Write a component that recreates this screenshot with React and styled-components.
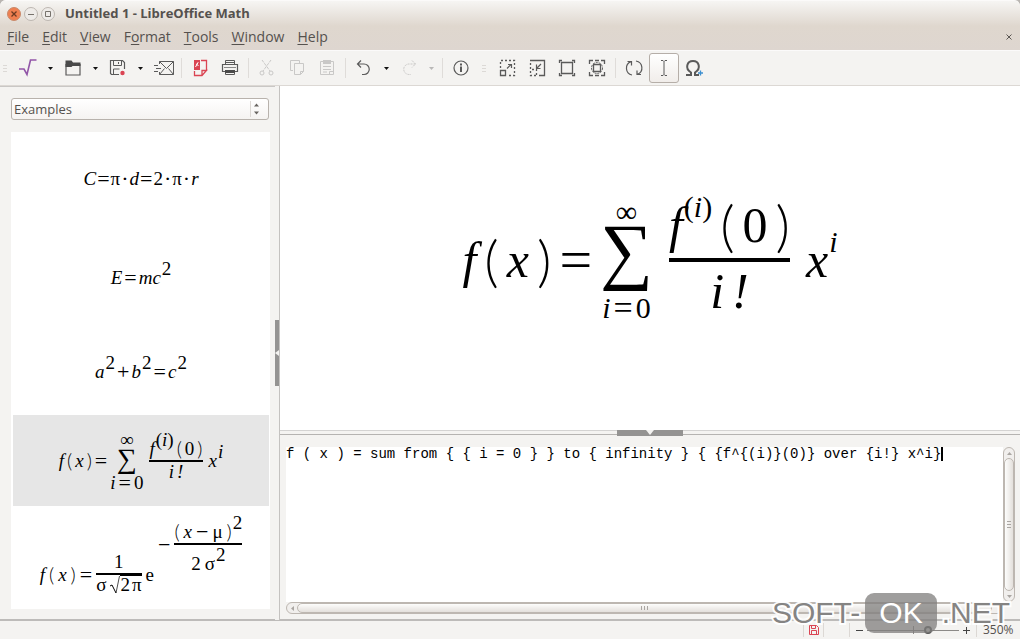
import React, { useState } from 'react';
import styled, { createGlobalStyle, css } from 'styled-components';

const menus = [
  ['', 'F', 'ile'],
  ['', 'E', 'dit'],
  ['', 'V', 'iew'],
  ['F', 'o', 'rmat'],
  ['', 'T', 'ools'],
  ['', 'W', 'indow'],
  ['', 'H', 'elp'],
];

const source =
  'f ( x ) = sum from { { i = 0 } } to { infinity } { {f^{(i)}(0)} over {i!} x^i}';

const icons = {
  formula: (
    <path d='M0 10h5l3 5.500L11.500 1H17.500' stroke='#9256a8' strokeWidth='1.600' />
  ),
  open: (
    <>
      <path d='M2 5.500h14v10.500H2z' strokeWidth='1.200' />
      <path d='M1.500 1.500h6l1.500 2h7.500V7h-8L7.500 8h-6z' fill='#4a4a4a' stroke='none' />
    </>
  ),
  save: (
    <>
      <path d='M10 15.500H2.500L1.500 14.500V1.500H13.500L15.500 3.500V10' strokeWidth='1.200' />
      <path d='M4.500 1.500v5h8v-5M9.500 3v2M4.500 15v-5h6' />
      <circle cx='13.500' cy='14' r='2.200' fill='#da4453' stroke='none' />
    </>
  ),
  mail: (
    <path d='M5.500 5V2.500h14v13h-14V13M5.500 2.500l7 7 7-7M19.500 15.500l-5-6M5.500 15.500l5-6M0 6.500h4M2 9.500h5M0 12.500h4' />
  ),
  pdf: (
    <>
      <path d='M3 1h6v10H3z' fill='#da4453' stroke='none' />
      <path d='M10 1.500h5.500V11M3.500 12v4.500H11l4.500-5H11V16' stroke='#da4453' strokeWidth='1.300' />
      <path d='M4.500 8l2.500-4.500-1.500 2 2 1' stroke='#fff' />
    </>
  ),
  print: (
    <>
      <path d='M4.500 5V1.500h9V5M4.500 3.500h9' />
      <path d='M1.500 5.500h15v7h-15z' strokeWidth='1.200' />
      <path d='M3 8.500h12' stroke='#8a8a8a' />
      <path d='M4.500 11.500h9v4h-9z' fill='#f4f3f1' />
      <path d='M4 11h10v3H4z' fill='#4a4a4a' stroke='none' />
    </>
  ),
  cut: (
    <>
      <path d='M4 1l8 11M13 1L5 12' strokeDasharray='3 1' />
      <circle cx='4' cy='14' r='2' />
      <circle cx='13' cy='14' r='2' />
    </>
  ),
  copy: <path d='M5 11.500H2.500v-10h9V4M6.500 4.500h9v8l-3 3h-6zM15.500 12.500h-3v3' />,
  paste: (
    <>
      <path d='M2.500 2.500h13v13h-13z' />
      <path d='M5 1h8v4H5z' fill='#c9c8c7' stroke='none' />
      <path d='M5 7.500h8M5 10.500h8M5 13h4' />
      <path d='M11.500 15.500v-3h4' />
    </>
  ),
  undo: <path d='M6 1.500L2.500 5 6 8.500M2.500 5H9a5 5 0 0 1 0 10.500H7' strokeWidth='1.200' />,
  redo: (
    <path d='M12 1.500L15.500 5 12 8.500M15.500 5H9a5 5 0 0 0 0 10.500h2' strokeDasharray='2 1' />
  ),
  info: (
    <>
      <circle cx='9' cy='9' r='7' strokeWidth='1.200' />
      <path d='M9 7.500V13M9 4.500v2' strokeWidth='2' />
    </>
  ),
  zoomIn: (
    <>
      <path d='M2.500 11.500h5v5h-5z' strokeWidth='1.300' />
      <path d='M2.500 9V1.500h14v15H9' strokeDasharray='2 2' strokeWidth='1.300' />
      <path d='M9 9.500l4-4M10 5.500h3.500V9' strokeWidth='1.200' />
    </>
  ),
  zoomOut: (
    <>
      <path d='M2 1.500h14.500v15H11' strokeWidth='1.300' />
      <path d='M2.500 4v7M4 10.500h4.500v6M2.500 12v4.500H9' strokeDasharray='2 2' strokeWidth='1.300' />
      <path d='M13 5L9 9M8.500 5.500v4h4' strokeWidth='1.200' />
    </>
  ),
  zoom100: (
    <path
      d='M3.500 3.500h11v11h-11zM1.500 4V1.500H4M14 1.500h2.500V4M1.500 14v2.500H4M14 16.500h2.500V14'
      strokeWidth='1.300'
    />
  ),
  showAll: (
    <>
      <path
        d='M1.500 5V1.500H5M7 1.500h4M13 1.500h3.500V5M1.500 13v3.500H5M7 16.500h4M13 16.500h3.500V13'
        strokeWidth='1.300'
      />
      <circle cx='9' cy='9' r='5.500' strokeDasharray='2 1' />
      <path d='M5.500 5.500h7v7h-7z' strokeWidth='1.300' />
    </>
  ),
  update: (
    <path
      d='M7 16A7 7 0 0 1 6 2.600M2.500 2.500h4v4M11 2a7 7 0 0 1 1.500 13.400M16 15.500h-4v-4'
      strokeWidth='1.200'
    />
  ),
  cursor: <path d='M9 2.500v13M6 1.500h2l1 1 1-1h2M6 16.500h2l1-1 1 1h2' />,
  symbols: (
    <>
      <path d='M1 16h5v-2.500C-.5 9.500 2 2 8 2s8.500 7.500 2 11.500V16h4' strokeWidth='2' />
      <path d='M15.500 11.500v5M13 14h5' stroke='#3c8fd0' strokeWidth='1.300' />
    </>
  ),
};

const tools = [
  { icon: 'formula', label: 'New formula', menu: true },
  { icon: 'open', label: 'Open', menu: true },
  { icon: 'save', label: 'Save', menu: true },
  { icon: 'mail', label: 'Send by email' },
  { type: 'separator' },
  { icon: 'pdf', label: 'Export as PDF' },
  { icon: 'print', label: 'Print' },
  { type: 'separator' },
  { icon: 'cut', label: 'Cut', disabled: true },
  { icon: 'copy', label: 'Copy', disabled: true },
  { icon: 'paste', label: 'Paste', disabled: true },
  { type: 'separator' },
  { icon: 'undo', label: 'Undo', menu: true },
  { icon: 'redo', label: 'Redo', menu: true, disabled: true },
  { type: 'separator' },
  { icon: 'info', label: 'Document information' },
  { type: 'handle' },
  { icon: 'zoomIn', label: 'Zoom in' },
  { icon: 'zoomOut', label: 'Zoom out' },
  { icon: 'zoom100', label: 'Zoom 100%' },
  { icon: 'showAll', label: 'Show all' },
  { type: 'separator' },
  { icon: 'update', label: 'Update' },
  { icon: 'cursor', label: 'Formula cursor', active: true },
  { icon: 'symbols', label: 'Symbols' },
];

function Icon({ name, disabled }) {
  return (
    <svg
      width='18'
      height='18'
      viewBox='0 0 18 18'
      fill='none'
      overflow='visible'
      stroke={disabled ? '#c9c8c7' : '#5a5a5a'}
      aria-hidden='true'
    >
      {icons[name]}
    </svg>
  );
}

function ToolbarItem({ item }) {
  if (item.type === 'separator') return <Separator />;
  if (item.type === 'handle') return <Handle />;
  return (
    <>
      <ToolButton aria-label={item.label} disabled={item.disabled} $active={item.active}>
        <Icon name={item.icon} disabled={item.disabled} />
      </ToolButton>
      {item.menu && (
        <ToolButton aria-label={`${item.label} options`} disabled={item.disabled} $narrow>
          <svg width='5' height='3' viewBox='0 0 5 3' aria-hidden='true'>
            <path d='M0 0h5L2.500 3z' fill={item.disabled ? '#b9b8b7' : '#111'} />
          </svg>
        </ToolButton>
      )}
    </>
  );
}

function Series({ big }) {
  return (
    <Formula $big={big} $gap={big ? 8 : 3}>
      <i>f</i>
      <Paren>(</Paren>
      <i>x</i>
      <Paren>)</Paren>
      <Op>=</Op>
      <Stack>
        <Limit>∞</Limit>
        <Sum>∑</Sum>
        <Limit>
          <i>i</i>
          <Op>=</Op>
          <span>0</span>
        </Limit>
      </Stack>
      <Fraction>
        <Numerator>
          <i>f</i>
          <Sup>
            (<i>i</i>)
          </Sup>
          <Paren>(</Paren>
          <span>0</span>
          <Paren>)</Paren>
        </Numerator>
        <Bar />
        <Denominator>
          <i>i</i>
          <i>!</i>
        </Denominator>
      </Fraction>
      <Power>
        <i>x</i>
        <Sup>
          <i>i</i>
        </Sup>
      </Power>
    </Formula>
  );
}

function Circumference() {
  return (
    <Formula $gap={1}>
      <i>C</i>
      <Op>=</Op>
      <span>π</span>
      <Op>·</Op>
      <i>d</i>
      <Op>=</Op>
      <span>2</span>
      <Op>·</Op>
      <span>π</span>
      <Op>·</Op>
      <i>r</i>
    </Formula>
  );
}

function Energy() {
  return (
    <Formula $end $gap={2}>
      <i>E</i>
      <Op>=</Op>
      <i>mc</i>
      <Sup>2</Sup>
    </Formula>
  );
}

function Pythagoras() {
  return (
    <Formula $end $gap={2}>
      <i>a</i>
      <Sup>2</Sup>
      <Op>+</Op>
      <i>b</i>
      <Sup>2</Sup>
      <Op>=</Op>
      <i>c</i>
      <Sup>2</Sup>
    </Formula>
  );
}

function Gaussian() {
  return (
    <Formula $end $gap={4}>
      <Row>
        <i>f</i>
        <Paren>(</Paren>
        <i>x</i>
        <Paren>)</Paren>
        <Op>=</Op>
        <Fraction $tight>
          <Numerator>1</Numerator>
          <Bar />
          <Denominator>
            <span>σ</span>
            <Root>
              <svg width='10' height='19' viewBox='0 0 10 19' fill='none' stroke='#000' aria-hidden='true'>
                <path d='M0 11l2-1 4 8' />
                <path d='M6 18L9.500 1' strokeWidth='.7' />
              </svg>
              <Radicand>
                <span>2</span>
                <span>π</span>
              </Radicand>
            </Root>
          </Denominator>
        </Fraction>
        <span>e</span>
      </Row>
      <Exponent>
        <Op>−</Op>
        <Fraction $tight>
          <Numerator>
            <Paren>(</Paren>
            <i>x</i>
            <Op>−</Op>
            <span>μ</span>
            <Paren>)</Paren>
            <Sup>2</Sup>
          </Numerator>
          <Bar />
          <Denominator>
            <span>2</span>
            <span>σ</span>
            <Sup>2</Sup>
          </Denominator>
        </Fraction>
      </Exponent>
    </Formula>
  );
}

const examples = [Circumference, Energy, Pythagoras, Series, Gaussian];

export default function App() {
  const [selected, setSelected] = useState(3);
  const [text, setText] = useState(source);
  const [zoom, setZoom] = useState(350);

  return (
    <Window>
      <GlobalStyle />
      <TitleBar>
        <WindowButton aria-label='Close' $close>
          <svg width='6' height='6' viewBox='0 0 6 6' stroke='#6b3a22' strokeWidth='1.300'>
            <path d='M.5 .5l5 5M5.500 .5l-5 5' />
          </svg>
        </WindowButton>
        <WindowButton aria-label='Minimize'>
          <svg width='6' height='6' viewBox='0 0 6 6' stroke='#77726c'>
            <path d='M0 3.500h6' />
          </svg>
        </WindowButton>
        <WindowButton aria-label='Maximize'>
          <svg width='6' height='6' viewBox='0 0 6 6' stroke='#77726c' fill='none'>
            <path d='M.5 .5h5v5h-5z' />
          </svg>
        </WindowButton>
        <Title>Untitled 1 - LibreOffice Math</Title>
      </TitleBar>
      <MenuBar>
        {menus.map(([before, key, after]) => (
          <MenuButton key={before + key + after}>
            {before}
            <u>{key}</u>
            {after}
          </MenuButton>
        ))}
        <CloseDocument aria-label='Close document'>
          <svg width='6' height='6' viewBox='0 0 6 6' stroke='#5b5753'>
            <path d='M.5 .5l5 5M5.500 .5l-5 5' />
          </svg>
        </CloseDocument>
      </MenuBar>
      <Toolbar>
        <Handle $first />
        {tools.map((item, i) => (
          <ToolbarItem key={i} item={item} />
        ))}
      </Toolbar>
      <Workspace>
        <Sidebar>
          <Category>
            <select aria-label='Category' defaultValue='Examples'>
              <option>Examples</option>
            </select>
            <svg width='18' height='16' viewBox='0 0 18 16' aria-hidden='true'>
              <path d='M.5 0v16' stroke='#dcd8d4' />
              <path d='M4 5.500h5L6.500 2.500zM4 10.500h5l-2.500 3z' fill='#686460' />
            </svg>
          </Category>
          <List>
            {examples.map((Example, i) => (
              <Element
                key={i}
                aria-label={`Example ${i + 1}`}
                $selected={i === selected}
                onClick={() => setSelected(i)}
              >
                <Example />
              </Element>
            ))}
          </List>
        </Sidebar>
        <SideSplitter>
          <SideGrip>
            <svg width='4' height='6' viewBox='0 0 4 6'>
              <path d='M4 0v6L0 3z' fill='#f4f3f1' />
            </svg>
          </SideGrip>
        </SideSplitter>
        <Main>
          <Canvas>
            <Series big />
          </Canvas>
          <Splitter>
            <Grip>
              <svg width='8' height='5' viewBox='0 0 8 5'>
                <path d='M0 0h8L4 5z' fill='#f4f3f1' />
              </svg>
            </Grip>
          </Splitter>
          <Commands>
            <Editor>
              <textarea
                aria-label='Commands'
                rows={1}
                spellCheck={false}
                value={text}
                onChange={(e) => setText(e.target.value)}
              />
              <Caret />
            </Editor>
            <Scroll $vertical>
              <Arrow>
                <svg width='5' height='3' viewBox='0 0 5 3'>
                  <path d='M0 3h5L2.500 0z' fill='#aaa6a2' />
                </svg>
              </Arrow>
              <Thumb $vertical />
              <Arrow>
                <svg width='5' height='3' viewBox='0 0 5 3'>
                  <path d='M0 0h5L2.500 3z' fill='#aaa6a2' />
                </svg>
              </Arrow>
            </Scroll>
            <Scroll>
              <Arrow>
                <svg width='3' height='5' viewBox='0 0 3 5'>
                  <path d='M3 0v5L0 2.500z' fill='#aaa6a2' />
                </svg>
              </Arrow>
              <Thumb />
              <Arrow />
            </Scroll>
          </Commands>
        </Main>
      </Workspace>
      <StatusBar>
        <Cell>
          <svg width='10' height='10' viewBox='0 0 10 10' fill='none' stroke='#da4453' aria-hidden='true'>
            <path d='M.5 .5h7l2 2v7h-9zM2.500 .5v3h4v-3M2.500 9.500v-4h5v4' />
          </svg>
        </Cell>
        <Cell $wide />
        <Zoom>
          <ZoomButton aria-label='Zoom out' onClick={() => setZoom(Math.max(20, zoom - 10))}>
            <svg width='7' height='7' viewBox='0 0 7 7' stroke='#444'>
              <path d='M0 3.500h7' />
            </svg>
          </ZoomButton>
          <input
            type='range'
            aria-label='Zoom'
            min='20'
            max='510'
            value={zoom}
            onChange={(e) => setZoom(Number(e.target.value))}
          />
          <ZoomButton aria-label='Zoom in' onClick={() => setZoom(Math.min(510, zoom + 10))}>
            <svg width='7' height='7' viewBox='0 0 7 7' stroke='#444'>
              <path d='M0 3.500h7M3.500 0v7' />
            </svg>
          </ZoomButton>
        </Zoom>
        <Percent>{zoom}%</Percent>
      </StatusBar>
      <Watermark>
        <span>SOFT-</span>
        <Badge>OK</Badge>
        <span>.NET</span>
      </Watermark>
    </Window>
  );
}

const GlobalStyle = createGlobalStyle`
  * {
    box-sizing: border-box;
  }
  body {
    margin: 0;
    background: #b9b5b1;
  }
  button, select, input, textarea {
    font: inherit;
    color: inherit;
    margin: 0;
    padding: 0;
    border: none;
    background: none;
    outline: none;
  }
  svg {
    display: block;
    flex: none;
  }
`;

const Window = styled.div`
  position: relative;
  display: flex;
  flex-direction: column;
  height: 100vh;
  overflow: hidden;
  border-radius: 6px 6px 0 0;
  background: #f4f3f1;
  color: #55514e;
  font-family: 'Open Sans', 'Noto Sans', sans-serif;
  font-size: 13px;
`;

const TitleBar = styled.header`
  display: flex;
  align-items: center;
  gap: 3px;
  height: 26px;
  flex: none;
  padding: 0 7px;
  border-top: 1px solid #fbfaf9;
  background: linear-gradient(#f6f5f3, #dfd7ce);
`;

const WindowButton = styled.button`
  display: flex;
  align-items: center;
  justify-content: center;
  width: 14px;
  height: 14px;
  border: 1px solid ${({ $close }) => ($close ? '#c98a6c' : '#bdb7b1')};
  border-radius: 50%;
  background: ${({ $close }) => ($close ? '#ef7f50' : '#eeebe8')};
`;

const Title = styled.h1`
  margin: 0 0 2px 7px;
  font-size: 13px;
  line-height: 18px;
  font-weight: 700;
`;

const MenuBar = styled.nav`
  display: flex;
  align-items: center;
  gap: 1px;
  height: 24px;
  flex: none;
  padding-left: 1px;
  background: linear-gradient(#dfd7ce, #ded6d0);
  font-size: 14px;
`;

const MenuButton = styled.button`
  padding: 0 6px 2px;
  line-height: 20px;
  u {
    text-underline-offset: 2px;
  }
`;

const CloseDocument = styled.button`
  margin-left: auto;
  padding: 4px 8px 6px;
`;

const Toolbar = styled.div`
  display: flex;
  align-items: center;
  height: 36px;
  flex: none;
  border-top: 1px solid #fbfafa;
  border-bottom: 1px solid #dcd8d4;
`;

const ToolButton = styled.button`
  display: flex;
  align-items: center;
  justify-content: center;
  width: ${({ $narrow }) => ($narrow ? 15 : 30)}px;
  height: 30px;
  flex: none;
  ${({ $active }) =>
    $active &&
    css`
      border: 1px solid #b5aea8;
      border-radius: 3px;
      background: linear-gradient(#fff, #f1edea);
    `}
`;

const Separator = styled.div`
  width: 1px;
  height: 20px;
  flex: none;
  margin: 0 3px;
  background: #dfdcd9;
`;

const Handle = styled.div`
  width: 4px;
  height: 7px;
  flex: none;
  margin: ${({ $first }) => ($first ? '0 6px 0 3px' : '0 6px')};
  background: repeating-linear-gradient(#dcd9d6 0 1px, transparent 1px 3px);
`;

const Workspace = styled.div`
  display: flex;
  flex: 1;
  min-height: 0;
`;

const Sidebar = styled.aside`
  display: flex;
  flex-direction: column;
  gap: 12px;
  width: 275px;
  flex: none;
  padding: 11px 5px 10px 11px;
  border-top: 1px solid #c9c7c5;
  border-bottom: 1px solid #bdbbb9;
`;

const Category = styled.div`
  display: flex;
  align-items: center;
  height: 22px;
  flex: none;
  margin-right: 1px;
  border: 1px solid #b8b2ac;
  border-radius: 3px;
  background: linear-gradient(#fff, #f5f3f1);
  select {
    flex: 1;
    height: 20px;
    padding-left: 2px;
    appearance: none;
  }
`;

const List = styled.div`
  display: flex;
  flex-direction: column;
  gap: 3px;
  flex: 1;
  min-height: 0;
  overflow: hidden;
  padding: 1px 1px 1px 2px;
  background: #fff;
`;

const Element = styled.button`
  display: flex;
  align-items: center;
  justify-content: center;
  height: 91px;
  flex: none;
  background: ${({ $selected }) => ($selected ? '#e6e6e6' : '#fff')};
`;

const SideSplitter = styled.div`
  display: flex;
  align-items: center;
  width: 5px;
  flex: none;
  border-right: 1px solid #c4c2c0;
`;

const SideGrip = styled.div`
  display: flex;
  align-items: center;
  width: 4px;
  height: 66px;
  background: #949392;
`;

const Main = styled.main`
  display: flex;
  flex-direction: column;
  flex: 1;
  min-width: 0;
`;

const Canvas = styled.section`
  display: flex;
  align-items: center;
  justify-content: center;
  flex: 1;
  min-height: 0;
  padding-top: 4px;
  background: #fff;
`;

const Splitter = styled.div`
  display: flex;
  justify-content: center;
  height: 6px;
  flex: none;
  background: linear-gradient(#d4d3d2 0 1px, #f4f3f1 1px 4px, #b5b3b1 4px 5px, #f4f3f1 5px);
`;

const Grip = styled.div`
  display: flex;
  justify-content: center;
  width: 66px;
  height: 6px;
  background: #949392;
`;

const Commands = styled.section`
  display: grid;
  grid-template-columns: 1fr 12px;
  grid-template-rows: 1fr 12px;
  height: 184px;
  flex: none;
  padding: 11px 5px 5px 6px;
  border-bottom: 1px solid #bdbbb9;
`;

const Editor = styled.div`
  display: flex;
  overflow: hidden;
  background: #fff;
  color: #000;
  font: 14px/14px 'Liberation Mono', monospace;
  textarea {
    field-sizing: content;
    height: 14px;
    overflow: hidden;
    white-space: pre;
    resize: none;
  }
`;

const Caret = styled.div`
  width: 2px;
  height: 14px;
  background: #000;
`;

const Scroll = styled.div`
  display: flex;
  flex-direction: ${({ $vertical }) => ($vertical ? 'column' : 'row')};
  border: 1px solid #bdb7b1;
  border-radius: 6px;
  background: #f1efed;
`;

const Arrow = styled.div`
  display: flex;
  align-items: center;
  justify-content: center;
  width: 10px;
  height: 10px;
  flex: none;
`;

const Thumb = styled.div`
  flex: 1;
  border: 1px solid #bdb7b1;
  border-radius: 5px;
  background: ${({ $vertical }) =>
    $vertical
      ? 'repeating-linear-gradient(#aaa6a2 0 1px, transparent 1px 3px) center / 4px 7px no-repeat, linear-gradient(90deg, #fdfdfc, #e4e0dc)'
      : 'repeating-linear-gradient(90deg, #aaa6a2 0 1px, transparent 1px 3px) center / 7px 4px no-repeat, linear-gradient(#fdfdfc, #e4e0dc)'};
`;

const StatusBar = styled.footer`
  display: flex;
  align-items: center;
  justify-content: flex-end;
  height: 19px;
  flex: none;
  border-top: 1px solid #bdbbb9;
  font-size: 12px;
`;

const Cell = styled.div`
  display: flex;
  align-items: center;
  justify-content: center;
  width: ${({ $wide }) => ($wide ? 26 : 20)}px;
  height: 14px;
  border-left: 1px solid #dcd8d4;
`;

const Zoom = styled.div`
  display: flex;
  align-items: center;
  width: 128px;
  height: 14px;
  padding: 0 6px;
  gap: 4px;
  border-left: 1px solid #dcd8d4;
  border-right: 1px solid #dcd8d4;
  input {
    flex: 1;
    min-width: 0;
    height: 9px;
    appearance: none;
    background: linear-gradient(#8c8a88, #8c8a88) center / 100% 1px no-repeat,
      linear-gradient(#8c8a88, #8c8a88) center / 1px 8px no-repeat;
  }
  input::-webkit-slider-thumb {
    appearance: none;
    width: 8px;
    height: 8px;
    border: 2px solid #555;
    border-radius: 50%;
    background: #d8d6d4;
  }
`;

const ZoomButton = styled.button`
  padding: 2px 0;
`;

const Percent = styled.span`
  width: 43px;
  padding-left: 6px;
  line-height: 16px;
`;

const Watermark = styled.div`
  position: absolute;
  right: 10px;
  bottom: 6px;
  display: flex;
  align-items: center;
  gap: 5px;
  color: #858483;
  font: 30px/40px 'Liberation Sans', sans-serif;
  pointer-events: none;
  span {
    -webkit-text-stroke: 4px #fffffff0;
    paint-order: stroke fill;
  }
`;

const Badge = styled.b`
  padding: 0 14px;
  border-radius: 9px;
  background: #7f7e7dc0;
  color: #fff;
  font-weight: 400;
`;

/* Formula layout: a row is centred on the math axis, scripts hang above it */
const Formula = styled.div`
  --size: ${({ $big }) => ($big ? 50 : 19)}px;
  --script: ${({ $big }) => ($big ? 30 : 19)}px;
  --op: ${({ $big }) => ($big ? 58 : 22)}px;
  --script-op: ${({ $big }) => ($big ? 34 : 22)}px;
  --paren: ${({ $big }) => ($big ? 56 : 20)}px;
  --sum: ${({ $big }) => ($big ? 74 : 28)}px;
  --sum-line: ${({ $big }) => ($big ? 46 : 20)}px;
  --drop: ${({ $big }) => ($big ? 20 : 4)}px;
  --gap: ${({ $gap }) => $gap}px;
  --lift: ${({ $big }) => ($big ? 28 : 9)}px;
  --balance: ${({ $big }) => ($big ? 8 : 9)}px;
  --bar: ${({ $big }) => ($big ? 4 : 2)}px;
  --over: ${({ $big }) => ($big ? 8 : 2)}px;
  --under: ${({ $big }) => ($big ? 4 : 0)}px;
  display: flex;
  align-items: ${({ $end }) => ($end ? 'flex-end' : 'center')};
  gap: var(--gap);
  color: #000;
  font-family: 'Liberation Serif', serif;
  font-size: var(--size);
  line-height: var(--size);
  white-space: nowrap;
`;

const Row = styled.div`
  display: flex;
  align-items: center;
  gap: var(--gap);
`;

const Exponent = styled(Row)`
  margin-bottom: 21px;
`;

const Power = styled(Row)`
  align-items: flex-end;
  padding-bottom: var(--balance);
`;

const Sup = styled.span`
  margin: 0 0 var(--lift) calc(var(--gap) * -1);
  padding-left: 1px;
  font-size: var(--script);
  line-height: var(--script);
`;

const Op = styled.span`
  font-size: var(--op);
`;

const Limit = styled.span`
  --op: var(--script-op);
  display: flex;
  gap: 3px;
  font-size: var(--script);
  line-height: var(--script);
`;

const Paren = styled.span`
  font-family: Lato, 'Liberation Serif', serif;
  font-size: var(--paren);
  font-weight: 300;
`;

const Sum = styled.span`
  padding-bottom: var(--drop);
  font-size: var(--sum);
  line-height: var(--sum-line);
`;

const Stack = styled.div`
  display: grid;
  grid-template-rows: 1fr auto 1fr;
  justify-items: center;
  align-items: end;
`;

const Fraction = styled.div`
  display: grid;
  grid-template-rows: 1fr auto 1fr;
  margin: 0 ${({ $tight }) => ($tight ? '0' : 'var(--gap)')};
`;

const Numerator = styled.div`
  display: flex;
  align-items: flex-end;
  justify-content: center;
  gap: var(--gap);
  padding-bottom: var(--over);
`;

const Denominator = styled(Numerator)`
  align-self: start;
  padding: var(--under) 0 0;
`;

const Bar = styled.div`
  height: var(--bar);
  background: #000;
`;

const Root = styled.span`
  display: flex;
`;

const Radicand = styled.span`
  display: flex;
  gap: 2px;
  border-top: 1px solid #000;
  line-height: 18px;
`;
